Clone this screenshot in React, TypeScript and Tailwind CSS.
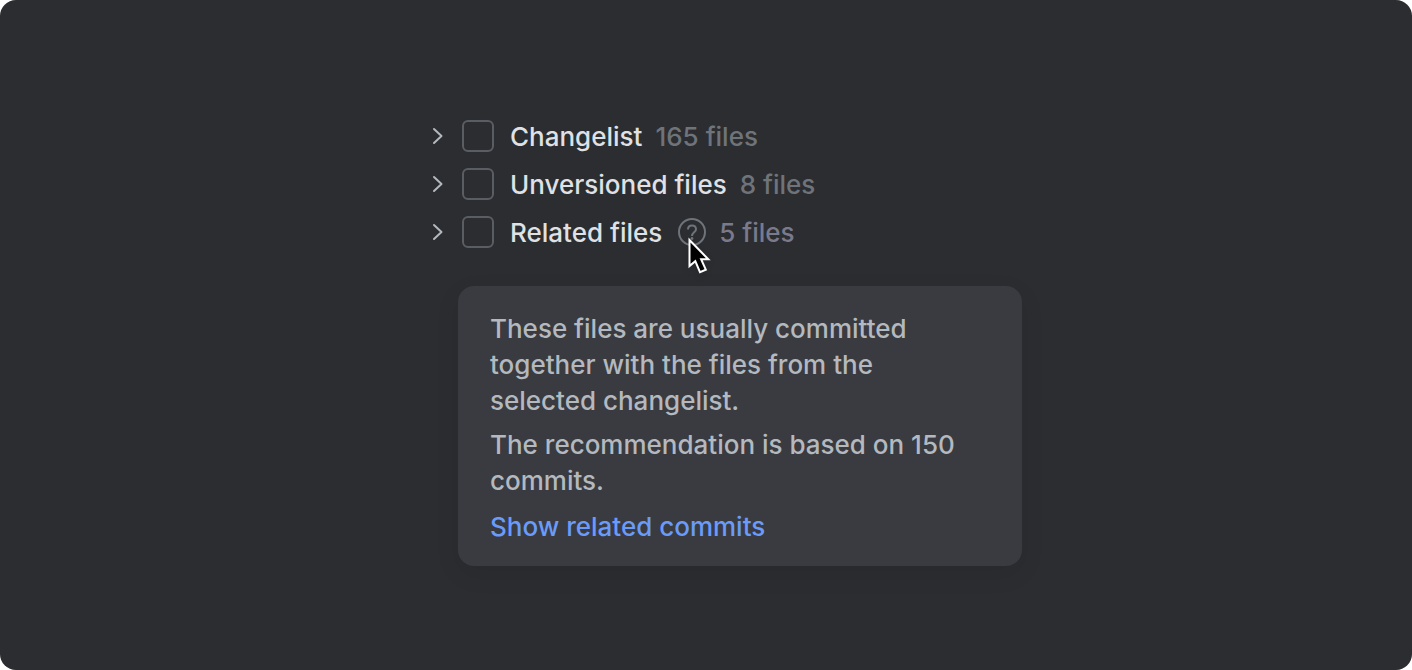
import { useState } from "react";

type Group = { id: string; name: string; count: string; help?: boolean };

const groups: Group[] = [
  { id: "changelist", name: "Changelist", count: "165 files" },
  { id: "unversioned", name: "Unversioned files", count: "8 files" },
  { id: "related", name: "Related files", count: "5 files", help: true },
];

function Chevron() {
  return (
    <svg width="12" height="20" viewBox="0 0 12 20" fill="none" stroke="#b4b8bf" strokeWidth="2" strokeLinecap="round" strokeLinejoin="round" aria-hidden="true">
      <path d="M2 3l7.500 7L2 17" />
    </svg>
  );
}

function HelpIcon() {
  return (
    <svg width="28" height="28" viewBox="0 0 28 28" fill="none" stroke="#6f737a" strokeWidth="2" aria-hidden="true">
      <circle cx="14" cy="14" r="13" />
      <path d="M10 11.500c0-2.500 1.700-4 4-4s4 1.500 4 3.700c0 3-4 3.300-4 6.800" />
      <circle cx="14" cy="20.500" r="1.400" fill="#6f737a" stroke="none" />
    </svg>
  );
}

function Pointer() {
  return (
    <svg className="pointer-events-none absolute top-4 left-2 drop-shadow-md" width="28" height="42" viewBox="0 0 28 42" aria-hidden="true">
      <path d="M3.500 6v26l5.800-4.800 4.700 11 5.800-2.500-4.700-10.500h7.200z" fill="#000" stroke="#fff" strokeWidth="2" />
    </svg>
  );
}

function GroupRow({ group }: { group: Group }) {
  const [checked, setChecked] = useState(false);
  return (
    <li className="flex h-12 items-center">
      <button type="button" aria-label={`Expand ${group.name}`} className="mr-4 flex h-8 w-4 items-center justify-center">
        <Chevron />
      </button>
      <input
        id={group.id}
        type="checkbox"
        checked={checked}
        onChange={(e) => setChecked(e.target.checked)}
        className="size-8 shrink-0 appearance-none rounded-md border-2 border-[#5a5d63] checked:bg-[#3574f0]"
      />
      <label htmlFor={group.id} className="ml-4 pt-0.5 text-[#dfe1e5]">{group.name}</label>
      {group.help && (
        <button type="button" aria-label="About related files" aria-describedby="related-help" className="relative ml-4 size-7">
          <HelpIcon />
          <Pointer />
        </button>
      )}
      <span className={group.help ? "ml-[13px] pt-0.5 text-[#7a7a8c]" : "ml-[13px] pt-0.5 text-[#6f737a]"}>{group.count}</span>
    </li>
  );
}

export default function App() {
  return (
    <main className="min-h-screen rounded-2xl bg-[#2b2d30] pt-28 pb-10 pl-10 font-['Inter',sans-serif] text-[26px] leading-9 font-medium">
      <div className="mx-auto max-w-[592px]">
        <ul>
          {groups.map((group) => (
            <GroupRow key={group.id} group={group} />
          ))}
        </ul>
        <section id="related-help" className="mt-[30px] ml-7 rounded-2xl bg-[#393b40] pt-[25px] pr-12 pb-[21px] pl-8 text-[#b4b8bf] shadow-[0_8px_24px_rgba(0,0,0,0.08)]">
          <p>These files are usually committed together with the files from the selected changelist.</p>
          <p className="mt-2">The recommendation is based on 150 commits.</p>
          <a href="#related-commits" className="mt-2.5 block text-[#6b9bfa]">Show related commits</a>
        </section>
      </div>
    </main>
  );
}
